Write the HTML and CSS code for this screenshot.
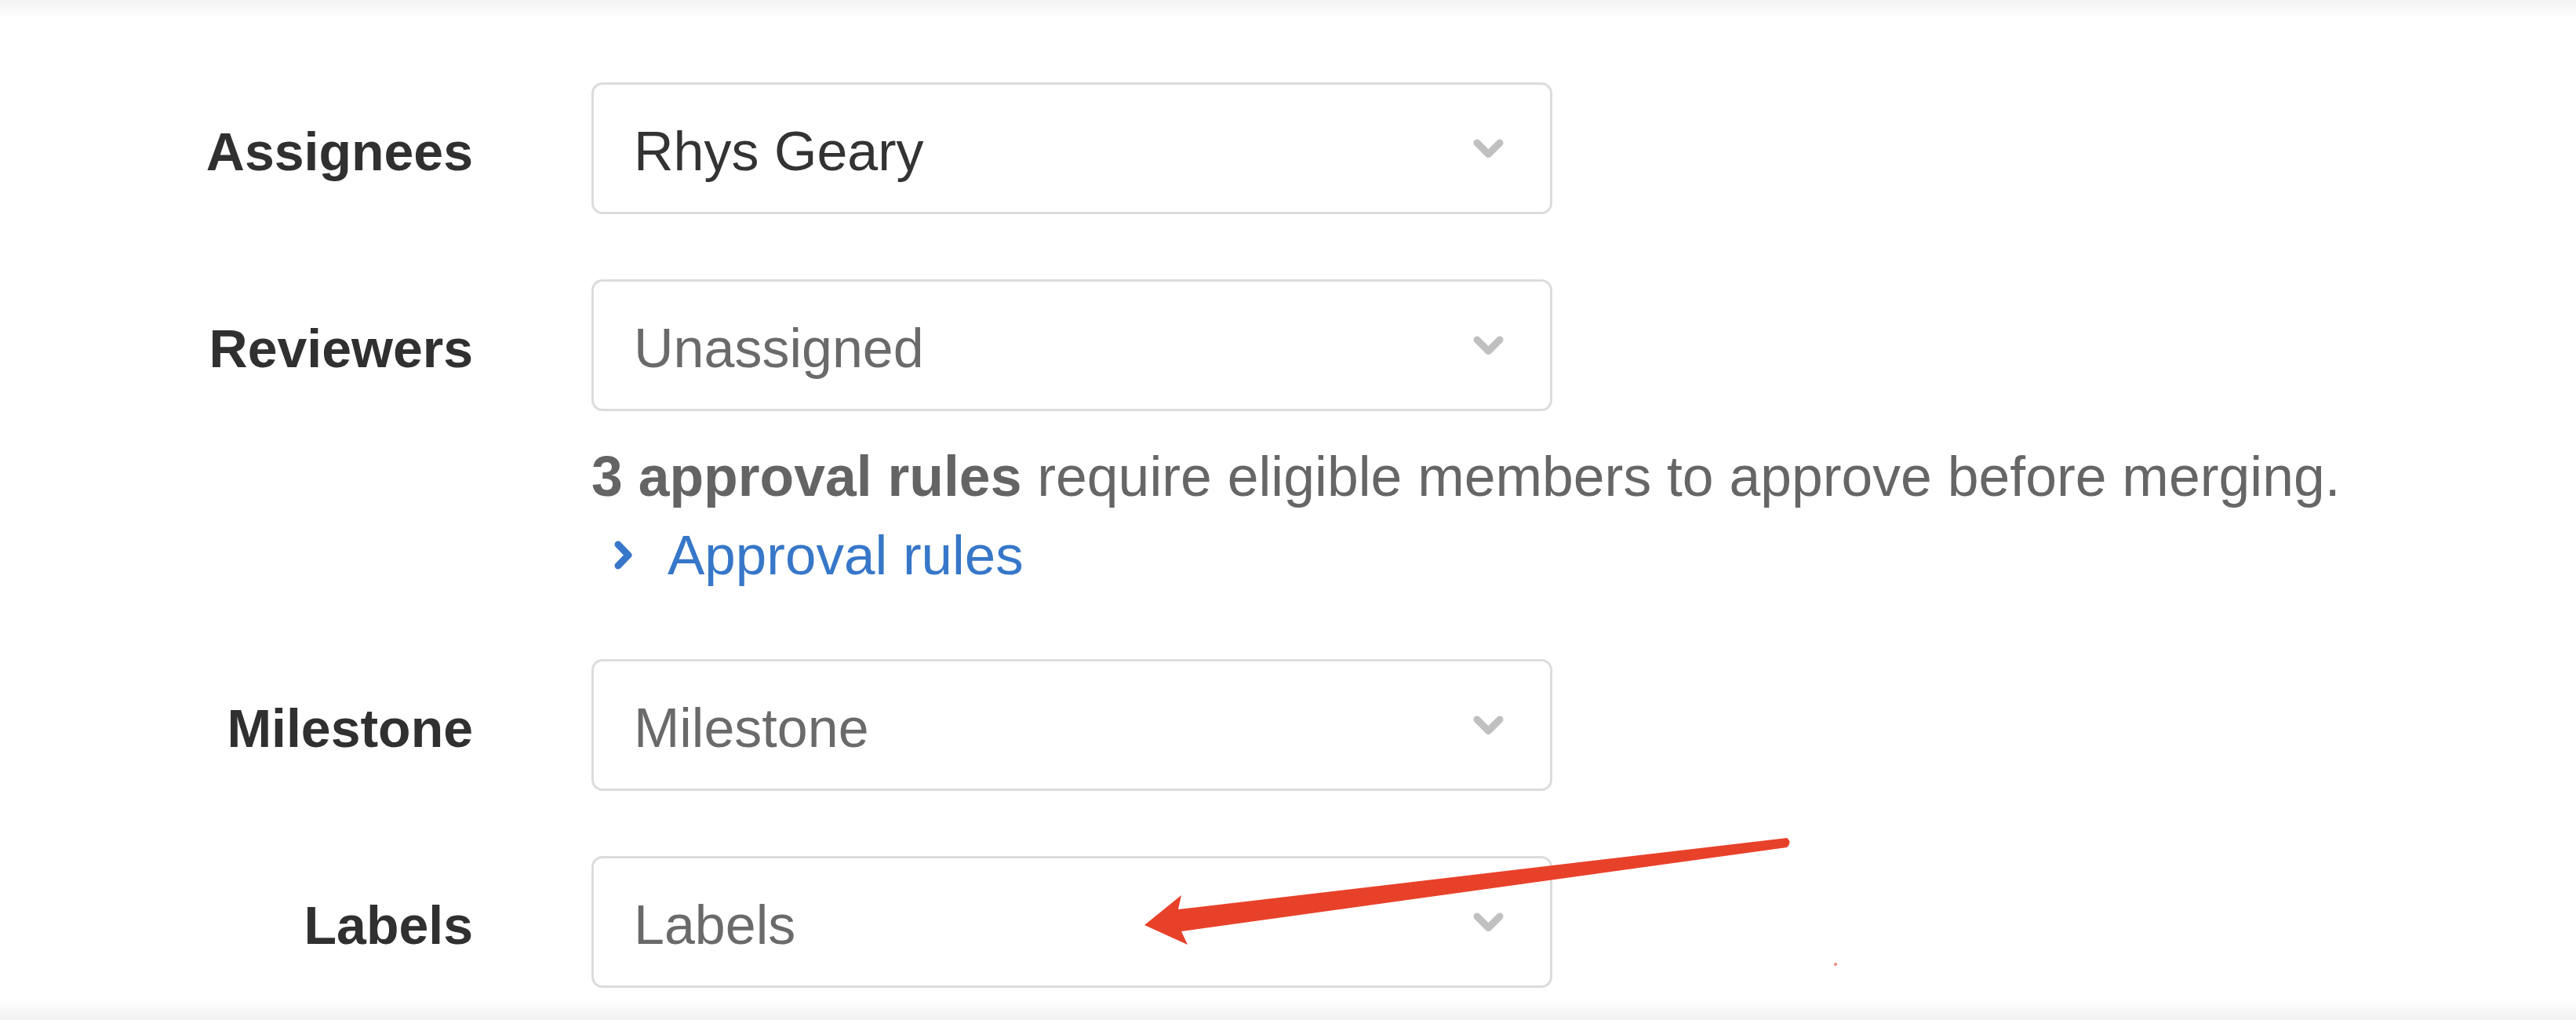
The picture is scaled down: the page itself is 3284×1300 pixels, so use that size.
FILE: index.html
```html
<!DOCTYPE html>
<html lang="en">
<head>
    <meta charset="UTF-8">
    <meta name="viewport" content="width=device-width, initial-scale=1.0">
    <title>Merge request sidebar fields</title>
    <link rel="stylesheet" href="styles.css">
</head>
<body>
    <div class="form">
        <div class="row">
            <label class="label">Assignees</label>
            <div class="field">
                <div class="select">
                    <span class="value">Rhys Geary</span>
                    <svg class="caret" width="39" height="25" viewBox="0 0 39 25"><polyline points="5,5 19.5,19.5 34,5"/></svg>
                </div>
            </div>
        </div>

        <div class="row">
            <label class="label">Reviewers</label>
            <div class="field">
                <div class="select">
                    <span class="value placeholder">Unassigned</span>
                    <svg class="caret" width="39" height="25" viewBox="0 0 39 25"><polyline points="5,5 19.5,19.5 34,5"/></svg>
                </div>
                <p class="help"><strong>3 approval rules</strong> require eligible members to approve before merging.</p>
                <a class="toggle" href="#">
                    <svg width="25" height="37" viewBox="0 0 25 37"><polyline points="6,5 19,18.5 6,32"/></svg>
                    <span>Approval rules</span>
                </a>
            </div>
        </div>

        <div class="row">
            <label class="label">Milestone</label>
            <div class="field">
                <div class="select">
                    <span class="value placeholder">Milestone</span>
                    <svg class="caret" width="39" height="25" viewBox="0 0 39 25"><polyline points="5,5 19.5,19.5 34,5"/></svg>
                </div>
            </div>
        </div>

        <div class="row">
            <label class="label">Labels</label>
            <div class="field">
                <div class="select">
                    <span class="value placeholder">Labels</span>
                    <svg class="caret" width="39" height="25" viewBox="0 0 39 25"><polyline points="5,5 19.5,19.5 34,5"/></svg>
                </div>
            </div>
        </div>
    </div>

    <!-- screenshot annotation -->
    <svg class="annotation" width="3284" height="1300" viewBox="0 0 3284 1300">
        <path d="M2278 1068 Q2285 1073 2278 1080 L1506 1187 L1514 1204 L1459 1179 L1506 1141 L1502 1159 Z"/>
        <circle cx="2340" cy="1229" r="2"/>
    </svg>
</body>
</html>
```

FILE: styles.css
```css
html {
    height: 100%;
}

body {
    position: relative;
    margin: 0;
    min-height: 1300px;
    box-sizing: border-box;
    padding-top: 105px;
    font-family: "Liberation Sans", Arial, sans-serif;
    color: #333;
    background: linear-gradient(to bottom, #f2f2f2 0, #fff 22px, #fff 1274px, #f1f1f1 1300px);
}

.form {
    display: flex;
    flex-direction: column;
    gap: 83px;
}

.row {
    display: grid;
    grid-template-columns: 603px 1225px;
    column-gap: 151px;
    align-items: start;
}

.label {
    height: 168px;
    box-sizing: border-box;
    padding-top: 8px;
    display: flex;
    align-items: center;
    justify-content: flex-end;
    font-size: 68px;
    font-weight: bold;
    color: #303030;
}

.select {
    height: 168px;
    box-sizing: border-box;
    display: flex;
    align-items: center;
    justify-content: space-between;
    padding: 0 59px 0 51px;
    border: 3px solid #dcdcdc;
    border-radius: 14px;
    background: #fff;
}

.value {
    padding-top: 8px;
    font-size: 70px;
    color: #333;
}

.value.placeholder {
    color: #6a6a6a;
}

.caret {
    fill: none;
    stroke: #c0c0c0;
    stroke-width: 9;
    stroke-linecap: round;
    stroke-linejoin: round;
}

.help {
    margin: 33px 0 0;
    font-size: 71.5px;
    line-height: 100px;
    color: #666;
    white-space: nowrap;
}

.help strong {
    color: #646464;
}

.toggle {
    display: flex;
    align-items: center;
    height: 100px;
    padding-left: 28px;
    gap: 44px;
    font-size: 71px;
    color: #3777c9;
    text-decoration: none;
}

.toggle svg {
    fill: none;
    stroke: #3777c9;
    stroke-width: 9;
    stroke-linecap: round;
    stroke-linejoin: round;
}

.annotation {
    position: absolute;
    top: 0;
    left: 0;
    pointer-events: none;
    fill: #e8412a;
}

.annotation circle {
    fill: #f08a7c;
}
```
